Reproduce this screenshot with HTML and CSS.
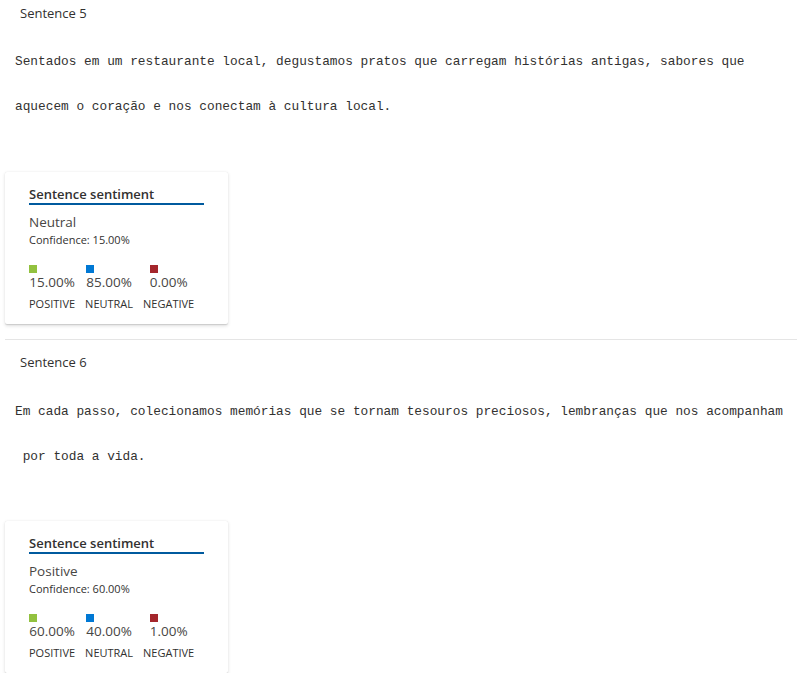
FILE: index.html
```html
<!DOCTYPE html>
<html>
<head>
<meta charset="utf-8">
<link rel="stylesheet" href="styles.css">
</head>
<body>
<section class="block">
  <div class="label">Sentence 5</div>
  <p class="sentence">Sentados em um restaurante local, degustamos pratos que carregam histórias antigas, sabores que<br>aquecem o coração e nos conectam à cultura local.</p>
  <div class="card">
    <div class="title">Sentence sentiment</div>
    <div class="verdict">Neutral</div>
    <div class="conf">Confidence: 15.00%</div>
    <div class="scores">
      <div class="col"><div class="val"><span class="sq pos"></span><span class="pct">15.00%</span></div><div class="lbl">POSITIVE</div></div>
      <div class="col"><div class="val"><span class="sq neu"></span><span class="pct">85.00%</span></div><div class="lbl">NEUTRAL</div></div>
      <div class="col"><div class="val"><span class="sq neg"></span><span class="pct">0.00%</span></div><div class="lbl">NEGATIVE</div></div>
    </div>
  </div>
</section>
<hr class="divider">
<section class="block next">
  <div class="label">Sentence 6</div>
  <p class="sentence">Em cada passo, colecionamos memórias que se tornam tesouros preciosos, lembranças que nos acompanham<br>&nbsp;por toda a vida.</p>
  <div class="card">
    <div class="title">Sentence sentiment</div>
    <div class="verdict">Positive</div>
    <div class="conf">Confidence: 60.00%</div>
    <div class="scores">
      <div class="col"><div class="val"><span class="sq pos"></span><span class="pct">60.00%</span></div><div class="lbl">POSITIVE</div></div>
      <div class="col"><div class="val"><span class="sq neu"></span><span class="pct">40.00%</span></div><div class="lbl">NEUTRAL</div></div>
      <div class="col"><div class="val"><span class="sq neg"></span><span class="pct">1.00%</span></div><div class="lbl">NEGATIVE</div></div>
    </div>
  </div>
</section>
</body>
</html>
```
FILE: styles.css
```css
html, body {
  margin: 0;
  padding: 0;
  background: #ffffff;
}
body {
  font-family: "Segoe UI", "Open Sans", "Noto Sans", sans-serif;
  color: #323130;
}
.block {
  padding: 4px 0 0 0;
}
.block.next {
  padding-top: 13px;
}
.label {
  margin-left: 20px;
  font-size: 13px;
  line-height: 18px;
  color: #323130;
}
.sentence {
  margin: 17px 0 0 15px;
  font-family: "Liberation Mono", "DejaVu Sans Mono", monospace;
  font-size: 12.8px;
  line-height: 45px;
  color: #323130;
  white-space: nowrap;
}
.next .sentence {
  margin-top: 18px;
}
.card {
  margin: 43px 0 0 5px;
  width: 223px;
  box-sizing: border-box;
  padding: 13px 24px 13px 24px;
  background: #fff;
  box-shadow: 0 1.6px 3.6px rgba(0,0,0,0.13), 0 0.3px 0.9px rgba(0,0,0,0.11);
  border-radius: 2px;
}
.next .card {
  margin-top: 42px;
}
.title {
  width: 175px;
  font-size: 13px;
  font-weight: 600;
  line-height: 18px;
  color: #323130;
  border-bottom: 2px solid #005a9e;
}
.verdict {
  margin-top: 8px;
  font-size: 13.5px;
  line-height: 18px;
  color: #484644;
}
.conf {
  margin-top: 1px;
  font-size: 11px;
  line-height: 15px;
  color: #323130;
}
.scores {
  display: flex;
  gap: 10px;
  margin-top: 18px;
}
.col {
  display: flex;
  flex-direction: column;
  align-items: center;
}
.val {
  display: flex;
  flex-direction: column;
  align-items: flex-start;
}
.sq {
  display: block;
  width: 8px;
  height: 8px;
}
.sq.pos { background: #92c13f; }
.sq.neu { background: #0078d4; }
.sq.neg { background: #a4262c; }
.pct {
  font-size: 13.5px;
  line-height: 18px;
  color: #484644;
}
.lbl {
  margin-top: 5px;
  font-size: 11px;
  line-height: 15px;
  color: #323130;
}
.divider {
  margin: 15px 0 0 5px;
  border: 0;
  border-top: 1px solid #e5e5e5;
  height: 0;
}
```
